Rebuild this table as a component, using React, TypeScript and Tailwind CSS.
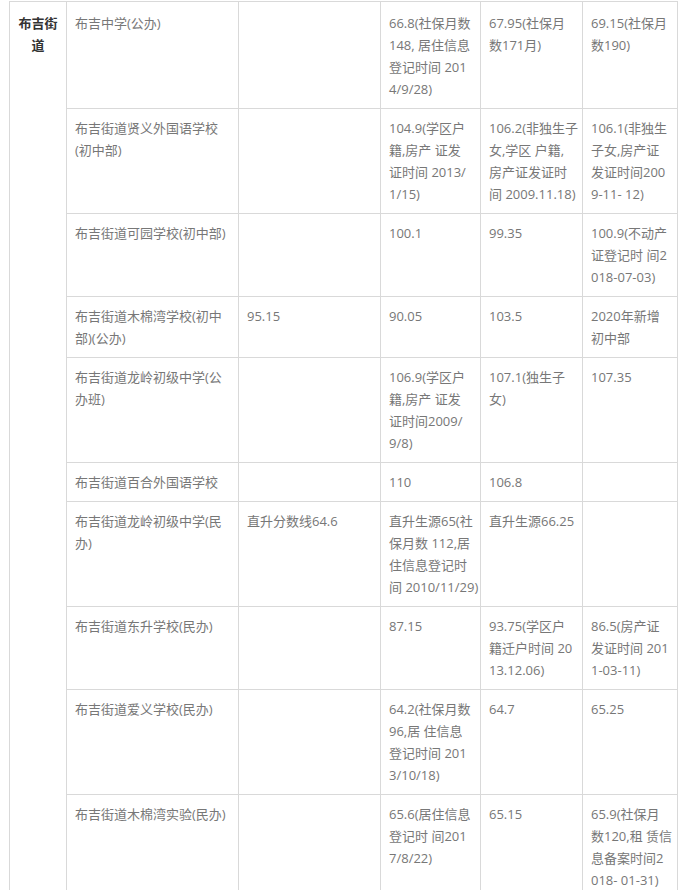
import React from 'react';

type Row = string[][];

// each cell is a list of lines, as wrapped in the original page
const rows: Row[] = [
  [['布吉中学(公办)'], [], ['66.8(社保月数', '148, 居住信息', '登记时间 201', '4/9/28)'], ['67.95(社保月', '数171月)'], ['69.15(社保月', '数190)']],
  [['布吉街道贤义外国语学校', '(初中部)'], [], ['104.9(学区户', '籍,房产 证发', '证时间 2013/', '1/15)'], ['106.2(非独生子', '女,学区 户籍,', '房产证发证时', '间 2009.11.18)'], ['106.1(非独生', '子女,房产证', '发证时间200', '9-11- 12)']],
  [['布吉街道可园学校(初中部)'], [], ['100.1'], ['99.35'], ['100.9(不动产', '证登记时 间2', '018-07-03)']],
  [['布吉街道木棉湾学校(初中', '部)(公办)'], ['95.15'], ['90.05'], ['103.5'], ['2020年新增', '初中部']],
  [['布吉街道龙岭初级中学(公', '办班)'], [], ['106.9(学区户', '籍,房产 证发', '证时间2009/', '9/8)'], ['107.1(独生子', '女)'], ['107.35']],
  [['布吉街道百合外国语学校'], [], ['110'], ['106.8'], []],
  [['布吉街道龙岭初级中学(民', '办)'], ['直升分数线64.6'], ['直升生源65(社', '保月数 112,居', '住信息登记时', '间 2010/11/29)'], ['直升生源66.25'], []],
  [['布吉街道东升学校(民办)'], [], ['87.15'], ['93.75(学区户', '籍迁户时间 20', '13.12.06)'], ['86.5(房产证', '发证时间 201', '1-03-11)']],
  [['布吉街道爱义学校(民办)'], [], ['64.2(社保月数', '96,居 住信息', '登记时间 201', '3/10/18)'], ['64.7'], ['65.25']],
  [['布吉街道木棉湾实验(民办)'], [], ['65.6(居住信息', '登记时 间201', '7/8/22)'], ['65.15'], ['65.9(社保月', '数120,租 赁信', '息备案时间2', '018- 01-31)']],
];

const Cell: React.FC<{ lines: string[]; first: boolean }> = ({ lines, first }) => (
  <td className={`border border-[#d9d9d9] px-2 pb-2 align-top ${first ? 'pt-[10px]' : 'pt-2'}`}>
    {lines.map((l, i) => (
      <div key={i} className="whitespace-nowrap">{l}</div>
    ))}
  </td>
);

export default function App() {
  return (
    <div
      className="bg-white min-h-[890px] overflow-hidden pl-[9px] pt-[1px] text-[13px] leading-[22px] text-[#777]"
      style={{ fontFamily: '"Open Sans", "Noto Sans CJK SC", sans-serif' }}
    >
      <table className="table-fixed border-collapse w-[668px]">
        <colgroup>
          <col className="w-[57px]" />
          <col className="w-[172px]" />
          <col className="w-[142px]" />
          <col className="w-[100px]" />
          <col className="w-[102px]" />
          <col className="w-[95px]" />
        </colgroup>
        <tbody>
          {rows.map((row, r) => (
            <tr key={r}>
              {r === 0 && (
                <td
                  rowSpan={rows.length}
                  className="border border-[#d9d9d9] px-2 pb-2 pt-[10px] align-top text-center font-bold text-[#333]"
                >
                  <div>布吉街</div>
                  <div>道</div>
                </td>
              )}
              {row.map((lines, c) => (
                <Cell key={c} lines={lines} first={r === 0} />
              ))}
            </tr>
          ))}
        </tbody>
      </table>
    </div>
  );
}
